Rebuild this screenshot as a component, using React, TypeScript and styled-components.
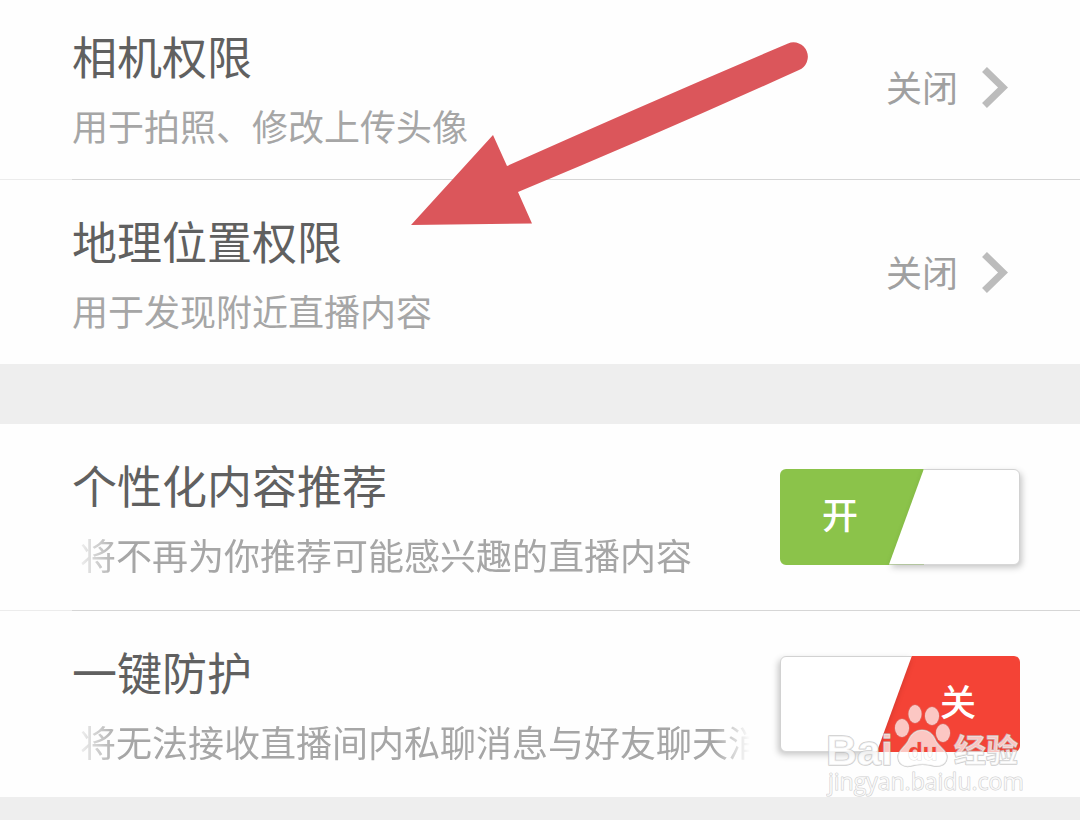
import React from "react";
import styled, { createGlobalStyle, css } from "styled-components";

const GlobalStyle = createGlobalStyle`
  *, *::before, *::after { box-sizing: border-box; }
  html { background: #eeeeee; }
  body {
    margin: 0;
    background: #eeeeee;
    color: #5f5f5f;
    font-family: "Noto Sans CJK SC", sans-serif;
    overflow-x: hidden;
  }
`;

const Page = styled.main`
  position: relative;
  display: flex;
  flex-direction: column;
  gap: 60px;
  padding-bottom: 23px;
`;

const Group = styled.section`
  position: relative;
  background: #fefefe;
`;

const rowStyle = css<{ $flush?: boolean }>`
  display: flex;
  align-items: center;
  justify-content: space-between;
  gap: 30px;
  width: 100%;
  padding: ${(p) => (p.$flush ? "26px" : "31px")} 72px 28px;
`;

const LinkRow = styled.button<{ $flush?: boolean }>`
  ${rowStyle}
  border: 0;
  background: transparent;
  color: inherit;
  font: inherit;
  text-align: left;
  cursor: pointer;
`;

const SwitchRow = styled.div`
  ${rowStyle}
  padding-right: 60px;
  padding-bottom: 30px;
`;

const Divider = styled.hr`
  height: 1px;
  margin: 0;
  border: 0;
  background: linear-gradient(to right, #ececec 72px, #d6d6d6 72px);
`;

const Texts = styled.span`
  display: flex;
  flex: 1;
  flex-direction: column;
  gap: 13px;
  min-width: 0;
`;

const Title = styled.span`
  color: #606060;
  font-size: 45px;
  line-height: 60px;
  white-space: nowrap;
`;

const Description = styled.span<{ $scrolling?: boolean }>`
  color: #a6a6a6;
  font-size: 36px;
  line-height: 52px;
  white-space: nowrap;
  ${(p) =>
    p.$scrolling &&
    css`
      overflow: hidden;
      padding-left: 8px;
      mask-image: linear-gradient(to right, transparent, #000 48px, #000 calc(100% - 36px), transparent);
    `}
`;

const Status = styled.span`
  display: flex;
  align-items: center;
  gap: 24px;
  padding-bottom: 2px;
  color: #a0a0a0;
  font-size: 36px;
  line-height: 48px;
`;

const StatusText = styled.span`
  padding-bottom: 4px;
`;

const ChevronIcon = styled.svg`
  width: 26px;
  height: 42px;
`;

const Toggle = styled.label`
  position: relative;
  flex: none;
  width: 240px;
  height: 96px;
  margin-bottom: 2px;
  cursor: pointer;
`;

const ToggleInput = styled.input`
  position: absolute;
  inset: 0;
  width: 100%;
  height: 100%;
  margin: 0;
  opacity: 0;
`;

const ToggleFace = styled.span<{ $on: boolean }>`
  display: flex;
  align-items: center;
  justify-content: ${(p) => (p.$on ? "flex-start" : "flex-end")};
  height: 100%;
  padding: 0 ${(p) => (p.$on ? "42px" : "44px")} 8px;
  border-radius: 6px;
  background: ${(p) =>
    p.$on
      ? "linear-gradient(to right, #8bc34a 144px, transparent 144px)"
      : "linear-gradient(to left, #f44336 144px, transparent 144px)"};
  color: #ffffff;
  font-size: 36px;
  font-weight: 500;
  line-height: 48px;
`;

const ToggleSlab = styled.span<{ $on: boolean }>`
  position: absolute;
  inset: 0;
  filter: drop-shadow(${(p) => (p.$on ? "2px" : "-2px")} 3px 3px rgba(0, 0, 0, 0.22));
  pointer-events: none;

  &::before {
    content: "";
    display: block;
    height: 100%;
    border: 1px solid #d2d2d2;
    border-radius: 6px;
    background: #ffffff;
    clip-path: ${(p) =>
      p.$on
        ? "polygon(144px 0, 100% 0, 100% 100%, 109px 100%)"
        : "polygon(0 0, 132px 0, 97px 100%, 0 100%)"};
  }
`;

const Arrow = styled.svg`
  position: absolute;
  top: 0;
  left: 0;
  width: 820px;
  height: 240px;
  pointer-events: none;
`;

const Watermark = styled.svg`
  position: absolute;
  right: 54px;
  bottom: 0;
  width: 200px;
  height: 97px;
  pointer-events: none;
`;

function Chevron() {
  return (
    <ChevronIcon viewBox="0 0 26 42" aria-hidden="true">
      <path d="M2.500 2.500L21 20.500L2.500 38.500" fill="none" stroke="#bcbcbc" strokeWidth="7" />
    </ChevronIcon>
  );
}

interface PermissionProps {
  title: string;
  description: string;
  flush?: boolean;
}

function Permission({ title, description, flush }: PermissionProps) {
  return (
    <LinkRow type="button" $flush={flush}>
      <Texts>
        <Title>{title}</Title>
        <Description>{description}</Description>
      </Texts>
      <Status>
        <StatusText>关闭</StatusText>
        <Chevron />
      </Status>
    </LinkRow>
  );
}

interface SwitchProps {
  id: string;
  title: string;
  description: string;
  initial: boolean;
}

function SwitchSetting({ id, title, description, initial }: SwitchProps) {
  const [on, setOn] = React.useState(initial);
  return (
    <SwitchRow>
      <Texts>
        <Title id={id + "-title"}>{title}</Title>
        <Description $scrolling>{description}</Description>
      </Texts>
      <Toggle htmlFor={id}>
        <ToggleFace $on={on}>{on ? "开" : "关"}</ToggleFace>
        <ToggleSlab $on={on} />
        <ToggleInput
          id={id}
          type="checkbox"
          role="switch"
          aria-labelledby={id + "-title"}
          checked={on}
          onChange={(e) => setOn(e.target.checked)}
        />
      </Toggle>
    </SwitchRow>
  );
}

function BaiduMark() {
  return (
    <Watermark viewBox="0 0 200 97" role="img" aria-label="Baidu 经验">
      <defs>
        <linearGradient id="du-fill" gradientUnits="userSpaceOnUse" x1="0" y1="0" x2="0" y2="97">
          <stop offset="0.536" stopColor="#f44336" />
          <stop offset="0.536" stopColor="#ffffff" />
        </linearGradient>
      </defs>
      <g
        fill="#ffffff"
        fillOpacity="0.7"
        stroke="#bcbcbc"
        strokeOpacity="0.75"
        strokeWidth="1.500"
        strokeLinejoin="round"
        paintOrder="stroke"
      >
        <text x="0" y="65" fontFamily="Liberation Sans, sans-serif" fontWeight="700" fontSize="43">Bai</text>
        <g strokeOpacity="0.3">
          <ellipse cx="76" cy="28" rx="7" ry="9" />
          <ellipse cx="89" cy="14" rx="6.500" ry="9" />
          <ellipse cx="106" cy="16" rx="7" ry="9" />
          <ellipse cx="117" cy="33" rx="7" ry="9" />
        </g>
        <path d="M96 30C104 30 108 36 110 41C113 47 121 50 121 57C121 64 115 67 108 66C101 64 92 64 85 66C77 68 72 63 72 57C72 50 79 47 82 41C84 36 88 30 96 30Z" />
        <text x="128" y="62" fontFamily="Noto Sans CJK SC, sans-serif" fontWeight="700" fontSize="32">经验</text>
        <text x="2" y="90" fontFamily="Open Sans, sans-serif" fontSize="23" strokeWidth="1">jingyan.baidu.com</text>
      </g>
      <text
        x="82"
        y="60"
        fontFamily="Liberation Sans, sans-serif"
        fontWeight="700"
        fontSize="24"
        fill="url(#du-fill)"
        stroke="#bcbcbc"
        strokeOpacity="0.5"
        strokeWidth="1"
        paintOrder="stroke"
      >
        du
      </text>
    </Watermark>
  );
}

export default function App() {
  return (
    <>
      <GlobalStyle />
      <Page>
        <Group>
          <Permission title="相机权限" description="用于拍照、修改上传头像" flush />
          <Divider />
          <Permission title="地理位置权限" description="用于发现附近直播内容" />
          <Arrow viewBox="0 0 820 240" aria-hidden="true">
            <path
              d="M411 225L493 135L507 166Q650 102 788 43.500A14.200 14.200 0 0 1 799 70Q660 133 518 192L532 223.500Z"
              fill="#db565b"
            />
          </Arrow>
        </Group>
        <Group>
          <SwitchSetting
            id="recommend"
            title="个性化内容推荐"
            description="将不再为你推荐可能感兴趣的直播内容"
            initial={true}
          />
          <Divider />
          <SwitchSetting
            id="protect"
            title="一键防护"
            description="将无法接收直播间内私聊消息与好友聊天消息"
            initial={false}
          />
          <BaiduMark />
        </Group>
      </Page>
    </>
  );
}
